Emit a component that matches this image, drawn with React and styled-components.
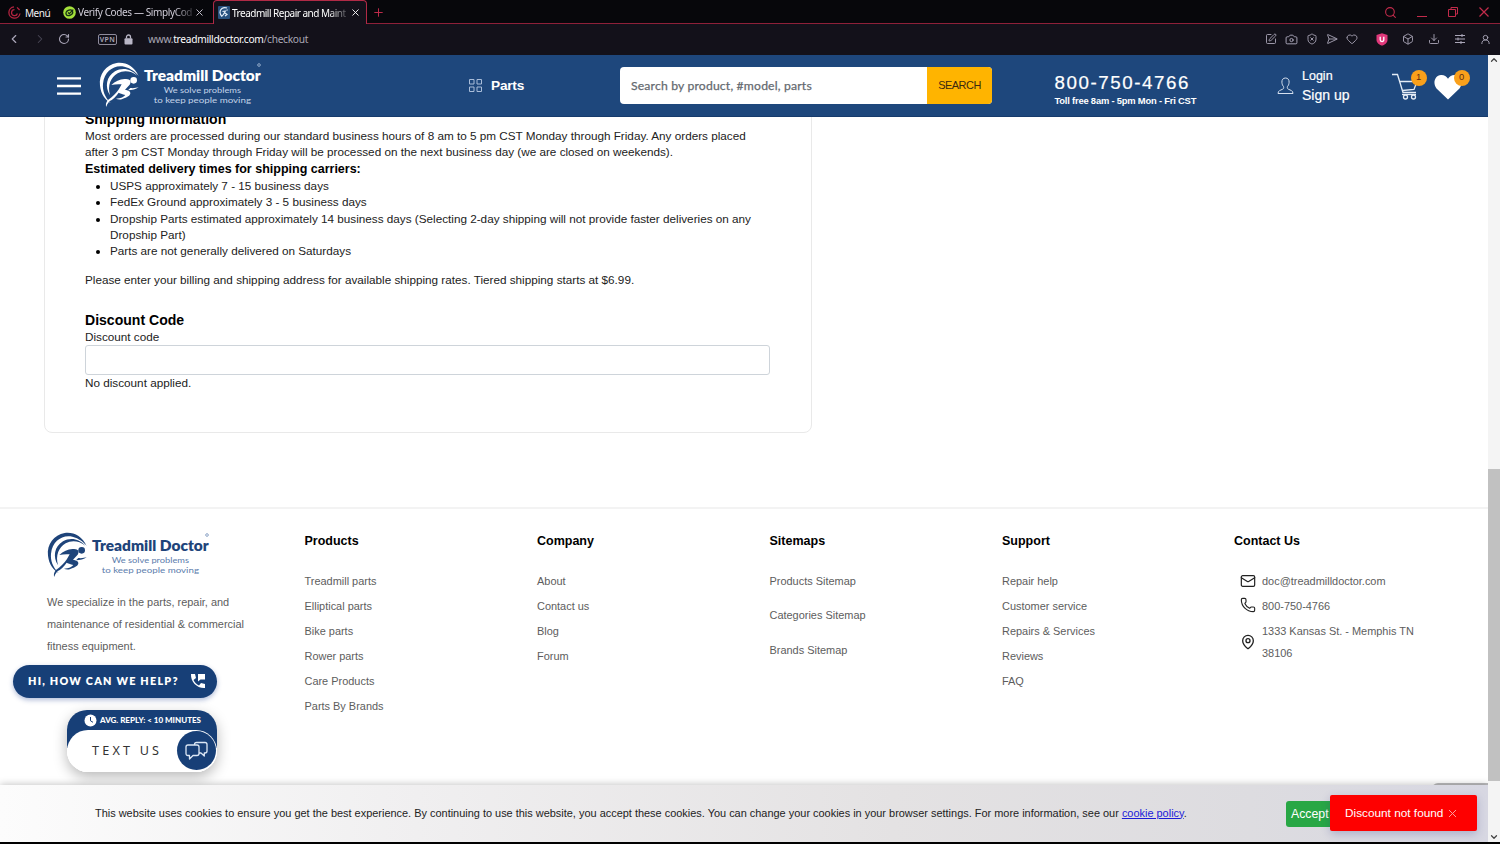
import React from "react";
import styled, { createGlobalStyle } from "styled-components";
import {
  ChevronLeft, ChevronRight, RotateCw, X, Plus, Search,
  SquarePen, Camera, ShieldX, SendHorizontal, Heart, Box, Download,
  UserRound, Mail, Phone, MapPin, ChevronUp, ChevronDown,
} from "lucide-react";

const sans = '"Liberation Sans", Arial, sans-serif';
const ui = '"Noto Sans", "Open Sans", sans-serif';

const Global = createGlobalStyle`
  * { box-sizing: border-box; }
  body { margin: 0; background: #000; font-family: ${sans}; }
  h2, h3, h4, p, ul { margin: 0; padding: 0; font-weight: inherit; }
  svg { display: block; flex: none; }
`;

const Window = styled.div`
  width: 1500px;
  height: 844px;
  overflow: hidden;
  display: flex;
  flex-direction: column;
  background: #000;
`;

/* Browser chrome */
const TabBar = styled.div`
  height: 24px;
  flex: none;
  display: flex;
  align-items: stretch;
  background: #07070b;
  box-shadow: inset 0 -1px #8e2039;
  font: 10px/24px ${ui};
  color: #d5d3dc;
  white-space: nowrap;
`;
const Menu = styled.div`
  width: 57px;
  padding: 1px 0 0 8px;
  display: flex;
  align-items: center;
  gap: 4px;
  color: #f2f2f5;
  letter-spacing: -0.45px;
`;
const Tab = styled.div`
  width: ${(p) => p.$w}px;
  padding: 0 ${(p) => (p.$active ? "5px 0 4px" : "8px 0 6px")};
  display: flex;
  align-items: center;
  gap: 2px;
  color: ${(p) => (p.$active ? "#fff" : "#d0cdd8")};
  background: ${(p) => (p.$active ? "#13111a" : "transparent")};
  border: solid #b02a46;
  border-width: ${(p) => (p.$active ? "1px 1px 0 1px" : "0")};
  border-radius: 4px 4px 0 0;
  svg:last-child { margin-left: auto; }
`;
const TabTitle = styled.span`
  letter-spacing: ${(p) => p.$ls || 0}px;
  mask-image: linear-gradient(90deg, #000 84%, rgba(0, 0, 0, 0.25));
`;
const NewTab = styled.div`
  flex: 1;
  display: flex;
  align-items: center;
  padding-left: 5px;
  color: #c22b4b;
`;
const WindowButtons = styled.div`
  display: flex;
  align-items: center;
  gap: 19px;
  padding-right: 10px;
  color: #c22b4b;
`;
const AddressBar = styled.div`
  height: 31px;
  flex: none;
  display: flex;
  align-items: center;
  padding: 0 9px 1px 7px;
  background: #13111a;
  color: #aaa6b8;
`;
const NavIcons = styled.div`
  width: 91px;
  display: flex;
  gap: 11.5px;
  align-items: center;
`;
const Vpn = styled.span`
  height: 11px;
  width: 19px;
  margin-right: 7px;
  border: 1px solid #8f8b9c;
  border-radius: 2px;
  font: 600 7px/9px ${ui};
  letter-spacing: 0.4px;
  text-align: center;
`;
const Url = styled.div`
  flex: 1;
  padding-left: 15px;
  font: 10.2px/16px ${ui};
  color: #aaa8b5;
  letter-spacing: -0.29px;
  b { font-weight: 400; color: #fff; }
`;
const Tools = styled.div`
  display: flex;
  align-items: center;
  gap: ${(p) => p.$gap}px;
  margin-right: ${(p) => p.$mr || 0}px;
`;

/* Page */
const Viewport = styled.div`
  height: 787px;
  flex: none;
  display: flex;
  background: #fff;
`;
const Page = styled.div`
  position: relative;
  width: 1488px;
  height: 787px;
  overflow: hidden;
`;
const Scrollbar = styled.div`
  width: 12px;
  background: #f4f4f4;
  display: flex;
  flex-direction: column;
  align-items: center;
  color: #444;
`;
const Thumb = styled.div`
  width: 12px;
  height: 312px;
  margin: 404px 0 auto;
  background: #c1c1c1;
  flex: none;
`;
const Header = styled.header`
  position: relative;
  z-index: 2;
  height: 62px;
  display: flex;
  align-items: center;
  background: #1e477c;
  border-bottom: 1px solid #173b6c;
  color: #fff;
  white-space: nowrap;
`;
const Burger = styled.svg`
  margin: 1px 15.5px 0 57px;
`;
const PartsLink = styled.div`
  width: 152px;
  margin-left: 203.5px;
  display: flex;
  align-items: center;
  gap: 8px;
  font: bold 13.7px/18px ${sans};
  letter-spacing: -0.25px;
`;
const SearchBox = styled.div`
  width: 372px;
  height: 37px;
  display: flex;
  border-radius: 4px;
  overflow: hidden;
  background: #fff;
`;
const Placeholder = styled.div`
  flex: 1;
  padding-left: 11px;
  font: 400 12.2px/37px Lato, sans-serif;
  letter-spacing: 0.17px;
  color: #656a70;
  -webkit-text-stroke: 0.25px #656a70;
`;
const SearchButton = styled.div`
  width: 65px;
  background: #ffb400;
  color: #3a2a10;
  text-align: center;
  font: 10.94px/37px ${sans};
  letter-spacing: -0.5px;
`;
const PhoneBlock = styled.div`
  width: 285px;
  padding: 4px 0 0 62.5px;
  font: bold 9.4px/12px ${sans};
  letter-spacing: -0.2px;
  div { font: 18.75px/24px ${sans}; letter-spacing: 1.56px; margin: 2px 0 0; -webkit-text-stroke: 0.2px #fff; }
`;
const Account = styled.div`
  display: flex;
  align-items: center;
  gap: 8px;
  width: 115px;
`;
const AccountLinks = styled.div`
  font: 14.06px/19px ${sans};
  -webkit-text-stroke: 0.2px #fff;
  div { font-size: 12.5px; }
`;
const IconSlot = styled.div`
  position: relative;
  width: ${(p) => p.$w}px;
  height: 31px;
`;
const Badge = styled.span`
  position: absolute;
  right: ${(p) => p.$right}px;
  top: 0;
  width: 16px;
  height: 16px;
  border-radius: 50%;
  background: #f9a01b;
  color: #5b2b12;
  font: 9.4px/14px ${sans};
  text-align: center;
`;

const Card = styled.section`
  width: 768px;
  height: 336px;
  margin: -20px 0 0 44px;
  padding: 13px 41px 0 40px;
  border: 1px solid #e9e9e9;
  border-radius: 8px;
  font: 11.72px/16.4px ${sans};
  color: #222;
  white-space: nowrap;
`;
const Title = styled.h2`
  font: bold 14.06px/17px ${sans};
  color: #000;
`;
const Subtitle = styled.h3`
  font: bold 12.5px/17px ${sans};
  color: #000;
`;
const Bullets = styled.ul`
  padding-left: 25px;
  margin-bottom: 12.4px;
  li::marker { color: #000; }
`;
const DiscountTitle = styled(Title)`
  margin-top: 23.2px;
`;
const Input = styled.div`
  height: 30px;
  border: 1px solid #ced4da;
  border-radius: 3px;
`;

const Footer = styled.footer`
  margin-top: 74px;
  border-top: 2px solid #f3f3f3;
  padding: 22px 0 0 47px;
  display: grid;
  grid-template-columns: 257.5px 232.5px 232.5px 232.5px 232px 1fr;
  font: 10.94px/25px ${sans};
  color: #5d5d5d;
  white-space: nowrap;
`;
const About = styled.div`
  line-height: 22px;
  svg { margin-left: -2.5px; }
  p { padding-top: 10px; }
`;
const ColTitle = styled.h4`
  font: bold 12.5px/20px ${sans};
  color: #000;
  margin-bottom: 18px;
`;
const Links = styled.div`
  line-height: ${(p) => p.$step || 25}px;
  margin-top: ${(p) => (p.$step ? -5 : 0)}px;
`;
const ContactRow = styled.div`
  display: flex;
  align-items: center;
  gap: 6px;
  padding: ${(p) => p.$top || 0}px 0 0 6px;
  line-height: ${(p) => p.$lh || 25}px;
  color: #5d5d5d;
  svg { color: #222; margin-top: ${(p) => p.$nudge || 0}px; }
`;

/* Floating widgets */
const HelpPill = styled.div`
  position: absolute;
  left: 13px;
  top: 610px;
  width: 204px;
  height: 33px;
  border-radius: 17px;
  padding: 0 11px 1px 15px;
  display: flex;
  align-items: center;
  justify-content: space-between;
  background: #173f77;
  color: #fff;
  font: 800 10.8px/32px Lato, sans-serif;
  letter-spacing: 1.25px;
  white-space: nowrap;
  box-shadow: 0 2px 5px rgba(30, 60, 140, 0.35);
`;
const TextWidget = styled.div`
  position: absolute;
  left: 67px;
  top: 655px;
  width: 150px;
  height: 62px;
  border-radius: 20px 20px 21px 21px;
  background: linear-gradient(#173f77 0 38px, #fff 38px);
  box-shadow: 0 5px 14px rgba(0, 0, 0, 0.28);
`;
const Reply = styled.div`
  height: 20px;
  display: flex;
  align-items: center;
  gap: 3px;
  padding: 0 0 0 17px;
  color: #fff;
  font: 900 8px/20px Lato, sans-serif;
  white-space: nowrap;
`;
const TextUs = styled.div`
  height: 42px;
  border-radius: 21px;
  background: #fff;
  display: flex;
  align-items: center;
  justify-content: space-between;
  padding: 0 1px 1px 25px;
  font: 12.6px/41px "Noto Sans", sans-serif;
  letter-spacing: 3.2px;
  color: #333;
`;
const ChatCircle = styled.div`
  width: 39px;
  height: 39px;
  border-radius: 50%;
  background: #173f77;
  display: flex;
  align-items: center;
  justify-content: center;
`;
const BackTop = styled.div`
  position: absolute;
  right: 0;
  top: 728px;
  width: 56px;
  height: 8px;
  border-radius: 6px 0 0 0;
  background: #bcbcbe;
`;
const CookieBar = styled.div`
  position: absolute;
  left: 0;
  top: 730px;
  width: 1488px;
  height: 57px;
  display: flex;
  align-items: center;
  padding: 0 0 1px 95px;
  background: linear-gradient(90deg, #fcfcfc 0, #f0eff0 28%, #e4e2e3 60%, #dddce0 84%, #d7d7e2);
  box-shadow: 0 -1px 7px rgba(0, 0, 0, 0.22);
  font: 10.94px/20px ${sans};
  color: #222;
  white-space: nowrap;
  a { color: #1b1bd8; text-decoration: underline; }
`;
const CookieText = styled.p`
  width: 1191px;
  margin-top: -1px;
`;
const Accept = styled.div`
  width: 60px;
  height: 26px;
  margin-top: 2px;
  padding-left: 5px;
  border-radius: 3px;
  background: #28a745;
  color: #fff;
  font: 12.3px/27px ${sans};
`;
const Toast = styled.div`
  position: absolute;
  left: 1330px;
  top: 740px;
  width: 147px;
  height: 36px;
  padding: 0 18px 0 15px;
  display: flex;
  align-items: center;
  justify-content: space-between;
  border-radius: 2px;
  background: #fe0000;
  color: #fff;
  font: 11.8px/36px ${sans};
  white-space: nowrap;
  box-shadow: 0 3px 9px rgba(40, 50, 130, 0.25);
`;

const Logo = ({ color, soft }) => (
  <svg width="168" height="50" viewBox="0 0 504 150" fill={color}>
    <path d="M125 45C112 15 84 2 59 6 27 11 5 40 9 74c3 26 16 43 32 52C23 108 16 88 18 68 22 30 52 10 82 17c20 5 34 16 43 28Z" />
    <path d="M121 44C103 23 76 18 54 31 28 46 23 78 39 103c-8-30 2-53 23-66 18-10 40-8 59 7Z" />
    <circle cx="110" cy="58" r="10" />
    <path d="M43 72c14-13 31-21 49-17 9 2 11 9 6 16L84 86c9 2 16 4 16 10 0 8-9 13-24 18-8 3-14 1-19-1 15-1 24-5 28-11-8-3-18-5-20-7-8 12-18 22-28 26-5 7-8 12-9 17-3-7-1-14 5-21 14-10 25-21 33-33l8-14c-12-1-22 0-31 2Z" />
    <path d="M93 88c12-1 24-3 32-9-7 2-17 3-25 2Z" />
    <text x="141" y="60" fontFamily="Lato, sans-serif" fontWeight="800" fontSize="43" textLength="350" lengthAdjust="spacingAndGlyphs">Treadmill Doctor</text>
    <text x="200" y="95" fill={soft} fontFamily="Lato, sans-serif" fontSize="25" textLength="232" lengthAdjust="spacingAndGlyphs">We solve problems</text>
    <text x="170" y="125" fill={soft} fontFamily="Lato, sans-serif" fontSize="25" textLength="292" lengthAdjust="spacingAndGlyphs">to keep people moving</text>
    <circle cx="486" cy="12" r="4" fill="none" stroke={soft} strokeWidth="2" />
  </svg>
);

const ln = { strokeWidth: 1.8 };

export default function App() {
  return (
    <Window>
      <Global />
      <TabBar>
        <Menu>
          <svg width="13" height="13" viewBox="0 0 13 13" fill="none" stroke="#b32440" strokeWidth="1.3">
            <path d="M6 .9A5.600 5.600 0 1 0 12 7.500" />
            <path d="M6.500 3.600a3 3 0 1 0 2.900 3.900M9 1.400l2.600 2.600" />
          </svg>
          Menú
        </Menu>
        <Tab $w={156}>
          <svg width="13" height="13" viewBox="0 0 13 13">
            <circle cx="6.5" cy="6.5" r="6.3" fill="#a4e03a" />
            <ellipse cx="6.3" cy="6.7" rx="3.500" ry="2.600" transform="rotate(-25 6.3 6.7)" fill="none" stroke="#173016" strokeWidth="1.3" />
            <path d="M5 6.400l1.300 1.200 4-4" fill="none" stroke="#173016" strokeWidth="1.3" />
          </svg>
          <TabTitle $ls={-0.38}>Verify Codes — SimplyCod</TabTitle>
          <X size={11} strokeWidth={2} />
        </Tab>
        <Tab $w={154} $active>
          <svg width="12" height="13" viewBox="0 0 12 13">
            <rect width="12" height="13" rx="1" fill="#28527f" />
            <path d="M9 2C5 .5 1.800 3.500 2 6.500c.1 2 1 3 2 4M3.500 10.500C6 9 6 7 7.500 5L4.500 5.500M7 7l2 1.500L7 10M8.500 4h1.300" fill="none" stroke="#e4eefa" strokeWidth="1.200" />
          </svg>
          <TabTitle $ls={-0.5}>Treadmill Repair and Maint</TabTitle>
          <X size={11} strokeWidth={2} />
        </Tab>
        <NewTab><Plus size={13} {...ln} /></NewTab>
        <WindowButtons>
          <Search size={13} strokeWidth={2} />
          <svg width="12" height="12"><path d="M1 10.500h10" stroke="#c22b4b" /></svg>
          <svg width="12" height="12" fill="none" stroke="#c22b4b"><path d="M1.500 3.500h7v7h-7zM4 3.500v-2h6.500v6.500h-2" /></svg>
          <svg width="12" height="12" stroke="#c22b4b" strokeWidth="1.2"><path d="M1.500 1.500l9 9M10.500 1.500l-9 9" /></svg>
        </WindowButtons>
      </TabBar>
      <AddressBar>
        <NavIcons>
          <ChevronLeft size={14} strokeWidth={2} />
          <ChevronRight size={14} strokeWidth={1.8} color="#4a4756" />
          <RotateCw size={12} strokeWidth={2.2} />
        </NavIcons>
        <Vpn>VPN</Vpn>
        <svg width="9" height="11" viewBox="0 0 9 11">
          <rect x=".5" y="4.200" width="8" height="6.300" rx="1" fill="#b9b6c6" />
          <path d="M2.500 4.500V3a2 2 0 0 1 4 0v1.500" fill="none" stroke="#b9b6c6" strokeWidth="1.300" />
        </svg>
        <Url>www.<b>treadmilldoctor.com</b>/checkout</Url>
        <Tools $gap={8} $mr={18}>
          <SquarePen size={12} {...ln} />
          <Camera size={13} {...ln} />
          <ShieldX size={12} {...ln} />
          <SendHorizontal size={12} {...ln} />
          <Heart size={12} {...ln} />
        </Tools>
        <Tools $gap={14}>
          <svg width="12" height="13" viewBox="0 0 12 13">
            <path d="M6 .3l5.500 1.800v5C11.500 10 8.500 12 6 12.800 3.500 12 .5 10 .5 7.100v-5z" fill="#e0387a" />
            <path d="M4.200 3.800v3a1.800 1.800 0 0 0 3.600 0v-3" fill="none" stroke="#fff" strokeWidth="1.300" />
          </svg>
          <Box size={12} {...ln} />
          <Download size={12} {...ln} />
          <svg width="12" height="12" fill="none" stroke="#aaa6b8"><path d="M1 2.500h10M1 6h10M1 9.500h10M8 1v3M4 4.500v3M7 8v3" /></svg>
          <UserRound size={11} strokeWidth={2} />
        </Tools>
      </AddressBar>

      <Viewport>
        <Page>
          <Header>
            <Burger width="24" height="18" stroke="#fff" strokeWidth="2.4">
              <path d="M0 1.400h24M0 9h24M0 16.600h24" />
            </Burger>
            <Logo color="#fff" soft="#c3d3e8" />
            <PartsLink>
              <svg width="15" height="15" fill="none" stroke="#a9bdd9">
                <path d="M1.500 1.500h4.500v4.500H1.500zM9 1.500h4.500v4.500H9zM1.500 9h4.500v4.500H1.500zM9 9h4.500v4.500H9z" />
              </svg>
              Parts
            </PartsLink>
            <SearchBox>
              <Placeholder>Search by product, #model, parts</Placeholder>
              <SearchButton>SEARCH</SearchButton>
            </SearchBox>
            <PhoneBlock>
              <div>800-750-4766</div>
              Toll free 8am - 5pm Mon - Fri CST
            </PhoneBlock>
            <Account>
              <svg width="17" height="18" viewBox="0 0 17 18" fill="none" stroke="#d5e0ef" strokeWidth="1">
                <path d="M8.500 1C6 1 4.800 2.800 4.900 5.200c.1 2.100.8 3.500 1.700 4.400.3 1.400-.1 2.200-1.100 2.700C3.500 13.200 1 13.600 1 16.500h15c0-2.900-2.500-3.300-4.500-4.200-1-.5-1.400-1.300-1.100-2.700.9-.9 1.600-2.300 1.700-4.400C12.200 2.800 11 1 8.500 1Z" />
              </svg>
              <AccountLinks><div>Login</div>Sign up</AccountLinks>
            </Account>
            <IconSlot $w={42}>
              <svg width="27" height="31" viewBox="0 0 27 31" fill="none" stroke="#e4ecf6" strokeWidth="1.300">
                <path d="M0 4.500h5.500l5.500 18h13M7.300 11.500H25l-3 8-11.500 1" />
                <circle cx="13.500" cy="27" r="2" /><circle cx="21.500" cy="27" r="2" />
                <path d="M10 24.500h14" />
              </svg>
              <Badge $right={7.5}>1</Badge>
            </IconSlot>
            <IconSlot $w={36}>
              <svg width="28" height="31" viewBox="0 0 28 31" fill="#fff">
                <path d="M14 29.500L2.500 18.500C-1.500 13.500.5 5.500 7 5c3-.2 5.500 1.200 7 3.800C15.500 6.200 18 4.800 21 5c6.500.5 8.500 8.500 4.500 13.500Z" />
              </svg>
              <Badge $right={0.5}>0</Badge>
            </IconSlot>
          </Header>

          <Card>
            <Title>Shipping Information</Title>
            <p>
              Most orders are processed during our standard business hours of 8 am to 5 pm CST Monday through Friday. Any orders placed<br />
              after 3 pm CST Monday through Friday will be processed on the next business day (we are closed on weekends).
            </p>
            <Subtitle>Estimated delivery times for shipping carriers:</Subtitle>
            <Bullets>
              <li>USPS approximately 7 - 15 business days</li>
              <li>FedEx Ground approximately 3 - 5 business days</li>
              <li>Dropship Parts estimated approximately 14 business days (Selecting 2-day shipping will not provide faster deliveries on any<br />Dropship Part)</li>
              <li>Parts are not generally delivered on Saturdays</li>
            </Bullets>
            <p>Please enter your billing and shipping address for available shipping rates. Tiered shipping starts at $6.99.</p>
            <DiscountTitle>Discount Code</DiscountTitle>
            <p>Discount code</p>
            <Input />
            <p>No discount applied.</p>
          </Card>

          <Footer>
            <About>
              <Logo color="#1e447a" soft="#5b7cac" />
              <p>
                We specialize in the parts, repair, and<br />
                maintenance of residential &amp; commercial<br />
                fitness equipment.
              </p>
            </About>
            <div>
              <ColTitle>Products</ColTitle>
              <Links>
                {["Treadmill parts", "Elliptical parts", "Bike parts", "Rower parts", "Care Products", "Parts By Brands"].map((t) => <div key={t}>{t}</div>)}
              </Links>
            </div>
            <div>
              <ColTitle>Company</ColTitle>
              <Links>
                {["About", "Contact us", "Blog", "Forum"].map((t) => <div key={t}>{t}</div>)}
              </Links>
            </div>
            <div>
              <ColTitle>Sitemaps</ColTitle>
              <Links $step={34.4}>
                {["Products Sitemap", "Categories Sitemap", "Brands Sitemap"].map((t) => <div key={t}>{t}</div>)}
              </Links>
            </div>
            <div>
              <ColTitle>Support</ColTitle>
              <Links>
                {["Repair help", "Customer service", "Repairs & Services", "Reviews", "FAQ"].map((t) => <div key={t}>{t}</div>)}
              </Links>
            </div>
            <div>
              <ColTitle>Contact Us</ColTitle>
              <ContactRow $nudge={-1}><Mail size={16} strokeWidth={1.8} />doc@treadmilldoctor.com</ContactRow>
              <ContactRow $nudge={-4}><Phone size={16} strokeWidth={1.7} />800-750-4766</ContactRow>
              <ContactRow $lh={22} $top={1}>
                <MapPin size={16} strokeWidth={2} />
                <span>1333 Kansas St. - Memphis TN<br />38106</span>
              </ContactRow>
            </div>
          </Footer>

          <HelpPill>
            HI, HOW CAN WE HELP?
            <svg width="16" height="16" viewBox="0 0 16 16" fill="#fff">
              <path d="M1 1h4l1 4-2.500 2c1.200 2.400 3 4.200 5.500 5.500l2-2.500 4 1v4C7 15.500.5 9 1 1Z" />
              <path d="M8 1h7v5.500h-4.500L8 8.500Z" />
            </svg>
          </HelpPill>
          <TextWidget>
            <Reply>
              <svg width="13" height="13" viewBox="0 0 13 13"><circle cx="6.500" cy="6.500" r="6" fill="#fff" /><path d="M6.500 3v3.800l2.500 1.500" fill="none" stroke="#173f77" /></svg>
              AVG. REPLY: &lt; 10 MINUTES
            </Reply>
            <TextUs>
              TEXT US
              <ChatCircle>
                <svg width="23" height="20" viewBox="0 0 23 20" fill="none" stroke="#dce7f5" strokeWidth="1.300" strokeLinejoin="round">
                  <path d="M3 4h9q2 0 2 2v6.500q0 2-2 2H8L4.500 18v-3.500H3q-2 0-2-2V6q0-2 2-2Z" />
                  <path d="M9.500 4V3.500q0-2 2-2H20q2 0 2 2v6.500q0 2-2 2h-.7v3L16 12h-2" />
                </svg>
              </ChatCircle>
            </TextUs>
          </TextWidget>
          <BackTop />
          <CookieBar>
            <CookieText>
              This website uses cookies to ensure you get the best experience. By continuing to use this website, you accept these cookies. You can change your cookies in your browser settings. For more information, see our <a>cookie policy</a>.
            </CookieText>
            <Accept>Accept</Accept>
          </CookieBar>
          <Toast>Discount not found<X size={13} strokeWidth={1.8} color="#ffa0a0" /></Toast>
        </Page>
        <Scrollbar>
          <ChevronUp size={10} strokeWidth={3} />
          <Thumb />
          <ChevronDown size={10} strokeWidth={3} />
        </Scrollbar>
      </Viewport>
    </Window>
  );
}
